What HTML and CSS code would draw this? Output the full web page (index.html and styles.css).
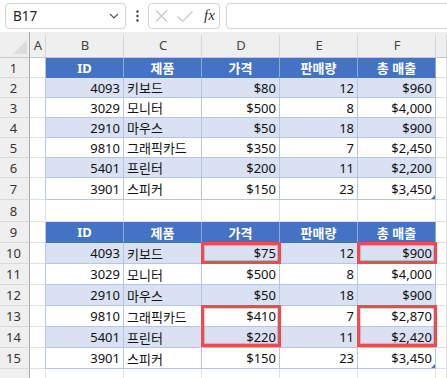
FILE: index.html
```html
<!DOCTYPE html>
<html lang="ko">
<head>
<meta charset="utf-8">
<link rel="stylesheet" href="styles.css">
</head>
<body>
<div class="fbar">
  <div class="namebox">
    <span class="ref">B17</span>
    <svg class="chev" width="10" height="6" viewBox="0 0 10 6"><path d="M1 1 L5 5 L9 1" fill="none" stroke="#555" stroke-width="1.2"/></svg>
  </div>
  <div class="dots">
    <svg width="3" height="12" viewBox="0 0 3 12"><circle cx="1.5" cy="1.5" r="1.2" fill="#444"/><circle cx="1.5" cy="6" r="1.2" fill="#444"/><circle cx="1.5" cy="10.5" r="1.2" fill="#444"/></svg>
  </div>
  <div class="fxbox">
    <svg class="ico-x" width="13" height="12" viewBox="0 0 13 12"><path d="M1 0.5 L12 11.5 M12 0.5 L1 11.5" stroke="#c4c4c4" stroke-width="1.1" fill="none"/></svg>
    <svg class="ico-ok" width="16" height="11" viewBox="0 0 16 11"><path d="M0.5 5.5 L5.5 10.3 L15.5 0.5" stroke="#c4c4c4" stroke-width="1.1" fill="none"/></svg>
    <span class="fx">fx</span>
  </div>
  <div class="formula"></div>
</div>

<div class="sheet">
  <!-- column header row -->
  <div class="corner"><span class="tri"></span></div>
  <div class="ch">A</div><div class="ch">B</div><div class="ch">C</div><div class="ch">D</div><div class="ch">E</div><div class="ch">F</div><div class="ch"></div>

  <!-- row 1 -->
  <div class="rh">1</div><div class="cell ea"></div>
  <div class="cell hd">ID</div><div class="cell hd">제품</div><div class="cell hd">가격</div><div class="cell hd">판매량</div><div class="cell hd">총 매출</div><div class="cell"></div>
  <!-- row 2 -->
  <div class="rh">2</div><div class="cell ea"></div>
  <div class="cell bd n">4093</div><div class="cell bd">키보드</div><div class="cell bd n">$80</div><div class="cell bd n">12</div><div class="cell bd n">$960</div><div class="cell"></div>
  <!-- row 3 -->
  <div class="rh">3</div><div class="cell ea"></div>
  <div class="cell wt n">3029</div><div class="cell wt">모니터</div><div class="cell wt n">$500</div><div class="cell wt n">8</div><div class="cell wt n">$4,000</div><div class="cell"></div>
  <!-- row 4 -->
  <div class="rh">4</div><div class="cell ea"></div>
  <div class="cell bd n">2910</div><div class="cell bd">마우스</div><div class="cell bd n">$50</div><div class="cell bd n">18</div><div class="cell bd n">$900</div><div class="cell"></div>
  <!-- row 5 -->
  <div class="rh">5</div><div class="cell ea"></div>
  <div class="cell wt n">9810</div><div class="cell wt">그래픽카드</div><div class="cell wt n">$350</div><div class="cell wt n">7</div><div class="cell wt n">$2,450</div><div class="cell"></div>
  <!-- row 6 -->
  <div class="rh">6</div><div class="cell ea"></div>
  <div class="cell bd n">5401</div><div class="cell bd">프린터</div><div class="cell bd n">$200</div><div class="cell bd n">11</div><div class="cell bd n">$2,200</div><div class="cell"></div>
  <!-- row 7 -->
  <div class="rh">7</div><div class="cell ea"></div>
  <div class="cell wt n">3901</div><div class="cell wt">스피커</div><div class="cell wt n">$150</div><div class="cell wt n">23</div><div class="cell wt n">$3,450<span class="handle"></span></div><div class="cell"></div>
  <!-- row 8 -->
  <div class="rh">8</div><div class="cell"></div>
  <div class="cell"></div><div class="cell"></div><div class="cell"></div><div class="cell"></div><div class="cell"></div><div class="cell"></div>
  <!-- row 9 -->
  <div class="rh">9</div><div class="cell ea"></div>
  <div class="cell hd">ID</div><div class="cell hd">제품</div><div class="cell hd">가격</div><div class="cell hd">판매량</div><div class="cell hd">총 매출</div><div class="cell"></div>
  <!-- row 10 -->
  <div class="rh">10</div><div class="cell ea"></div>
  <div class="cell bd n">4093</div><div class="cell bd">키보드</div><div class="cell bd n">$75<span class="mark"></span></div><div class="cell bd n">12</div><div class="cell bd n">$900<span class="mark"></span></div><div class="cell"></div>
  <!-- row 11 -->
  <div class="rh">11</div><div class="cell ea"></div>
  <div class="cell wt n">3029</div><div class="cell wt">모니터</div><div class="cell wt n">$500</div><div class="cell wt n">8</div><div class="cell wt n">$4,000</div><div class="cell"></div>
  <!-- row 12 -->
  <div class="rh">12</div><div class="cell ea"></div>
  <div class="cell bd n">2910</div><div class="cell bd">마우스</div><div class="cell bd n">$50</div><div class="cell bd n">18</div><div class="cell bd n">$900</div><div class="cell"></div>
  <!-- row 13 -->
  <div class="rh">13</div><div class="cell ea"></div>
  <div class="cell wt n">9810</div><div class="cell wt">그래픽카드</div><div class="cell wt n">$410<span class="mark two"></span></div><div class="cell wt n">7</div><div class="cell wt n">$2,870<span class="mark two"></span></div><div class="cell"></div>
  <!-- row 14 -->
  <div class="rh">14</div><div class="cell ea"></div>
  <div class="cell bd n">5401</div><div class="cell bd">프린터</div><div class="cell bd n">$220</div><div class="cell bd n">11</div><div class="cell bd n">$2,420</div><div class="cell"></div>
  <!-- row 15 -->
  <div class="rh">15</div><div class="cell ea"></div>
  <div class="cell wt n">3901</div><div class="cell wt">스피커</div><div class="cell wt n">$150</div><div class="cell wt n">23</div><div class="cell wt n">$3,450<span class="handle"></span></div><div class="cell"></div>
  <!-- row 16 (partial) -->
  <div class="rh"></div><div class="cell"></div>
  <div class="cell"></div><div class="cell"></div><div class="cell"></div><div class="cell"></div><div class="cell"></div><div class="cell"></div>
</div>
</body>
</html>
```

FILE: styles.css
```css
html, body {
  margin: 0;
  padding: 0;
  background: #ffffff;
  overflow: hidden;
  width: 447px;
  height: 378px;
}

body {
  font-family: "Noto Sans", "Noto Sans CJK KR", sans-serif;
  color: #222;
}

/* formula bar */
.fbar {
  display: flex;
  align-items: center;
  height: 32px;
  box-sizing: border-box;
  padding: 3px 0 3px 5px;
  background: #ffffff;
  overflow: hidden;
}

.namebox {
  width: 121px;
  height: 26px;
  box-sizing: border-box;
  border: 1px solid #d3d3d3;
  border-radius: 4px;
  display: flex;
  align-items: center;
  justify-content: space-between;
  padding: 0 6px 0 7px;
}

.ref {
  font-size: 13.5px;
  color: #222;
}

.chev {
  display: block;
}

.dots {
  width: 22px;
  display: flex;
  justify-content: center;
  align-items: center;
}

.dots svg {
  display: block;
}

.fxbox {
  width: 72px;
  height: 26px;
  box-sizing: border-box;
  border: 1px solid #d3d3d3;
  border-radius: 4px;
  display: flex;
  align-items: center;
  padding-left: 6px;
}

.ico-x {
  display: block;
  margin-right: 9px;
}

.ico-ok {
  display: block;
  margin-right: 11px;
}

.fx {
  font-family: "Liberation Serif", serif;
  font-style: italic;
  font-size: 15px;
  color: #333;
  line-height: 1;
  margin-top: -2px;
}

.formula {
  flex: 1;
  height: 26px;
  margin-left: 6px;
  margin-right: -10px;
  box-sizing: border-box;
  border: 1px solid #d3d3d3;
  border-radius: 4px;
}

/* sheet grid */
.sheet {
  display: grid;
  grid-template-columns: 30px 16px repeat(5, 78px) 1fr;
  grid-template-rows: 26px repeat(6, 20px) 22px 22px repeat(7, 21px) 21px;
  font-size: 13px;
}

.corner {
  background: #efefef;
  border-right: 1px solid #a8a8a8;
  border-bottom: 1px solid #c8c8c8;
  box-sizing: border-box;
  position: relative;
}

.tri {
  position: absolute;
  left: 13px;
  top: 8px;
  width: 14px;
  height: 14px;
  background: #dcdcdc;
  clip-path: polygon(100% 0, 100% 100%, 0 100%);
}

.ch {
  background: #efefef linear-gradient(#d6d6d6, #d6d6d6) right bottom / 1px 22px no-repeat;
  border-bottom: 1px solid #c8c8c8;
  box-sizing: border-box;
  display: flex;
  align-items: center;
  justify-content: center;
  font-size: 13px;
  color: #444;
  padding-top: 1px;
}

.rh {
  background: #efefef;
  border-right: 1px solid #a8a8a8;
  border-bottom: 1px solid #d8d8d8;
  box-sizing: border-box;
  display: flex;
  align-items: center;
  justify-content: center;
  padding-right: 2px;
  font-size: 13px;
  color: #333;
}

.cell {
  box-sizing: border-box;
  border-right: 1px solid #e1e1e1;
  border-bottom: 1px solid #e1e1e1;
  display: flex;
  align-items: center;
  padding: 0 3px 0 3px;
  white-space: nowrap;
  color: #111;
  position: relative;
}

.cell.ea {
  border-right-color: #b4c6e7;
}

.cell.hd {
  background: #4472c4;
  color: #ffffff;
  font-weight: 700;
  justify-content: center;
  border-right-color: #8ea9db;
  border-bottom-color: #4472c4;
}

.cell.bd {
  background: #d9e1f2;
  border-right-color: #b4c6e7;
  border-bottom-color: #b4c6e7;
}

.cell.wt {
  background: #ffffff;
  border-right-color: #b4c6e7;
  border-bottom-color: #b4c6e7;
}

.cell.n {
  justify-content: flex-end;
}

.handle {
  position: absolute;
  right: 0;
  bottom: 0;
  width: 4px;
  height: 4px;
  background: #4472c4;
  clip-path: polygon(100% 0, 100% 100%, 0 100%);
}

/* red highlight boxes, drawn over the cells */
.mark {
  position: absolute;
  z-index: 5;
  left: -1px;
  right: -2px;
  top: -1px;
  bottom: -1px;
  border: 3px solid #ef4a4f;
  box-shadow: inset 0 0 1px 1px rgba(0, 0, 0, 0.18);
  pointer-events: none;
}

.mark.two {
  bottom: auto;
  height: calc(200% + 2px);
  box-sizing: border-box;
}
```
